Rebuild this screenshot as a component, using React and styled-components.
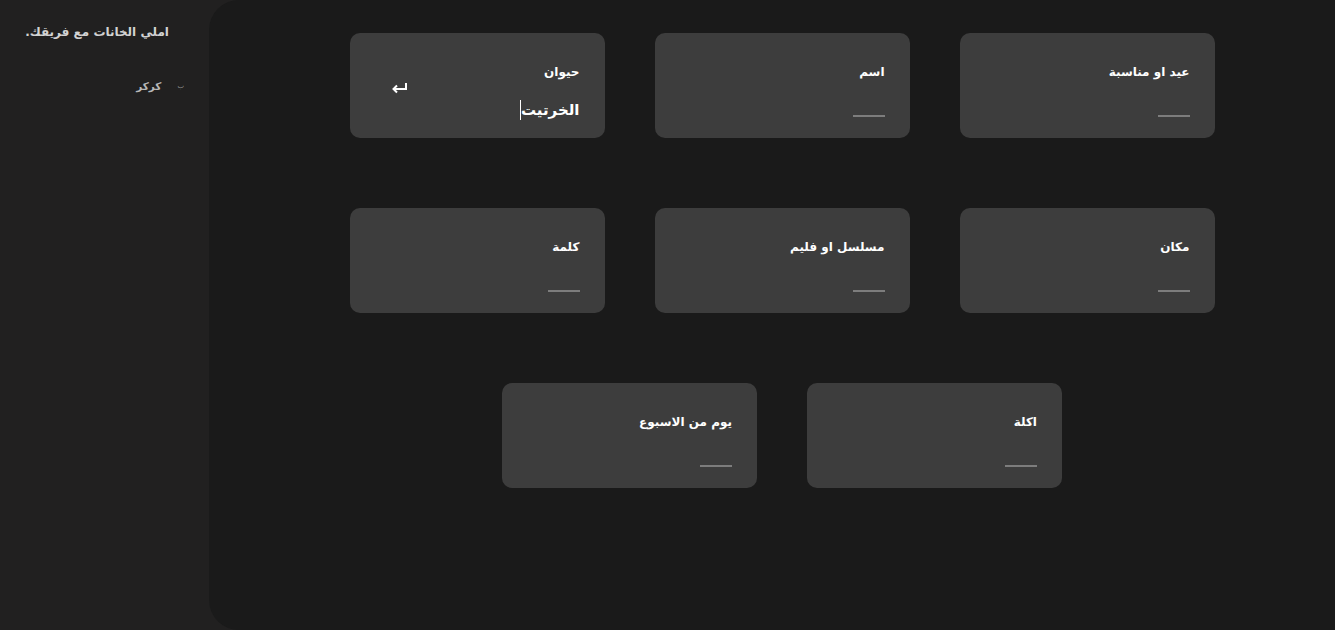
import React from "react";
import styled, { createGlobalStyle } from "styled-components";

const Global = createGlobalStyle`
  html, body { margin: 0; padding: 0; background: #212020; }
  body { font-family: "DejaVu Sans", "Noto Sans", sans-serif; }
  * { box-sizing: border-box; }
`;

const Page = styled.div`
  display: flex;
  height: 630px;
  background: #212020;
`;

const Sidebar = styled.aside`
  width: 209px;
  flex: none;
  direction: rtl;
  padding: 22px 40px 0 0;
  display: flex;
  flex-direction: column;
`;

const SideTitle = styled.h2`
  margin: 0;
  font-size: 12px;
  font-weight: 700;
  color: #d2d2d2;
  line-height: 20px;
`;

const TeamRow = styled.div`
  margin-top: 34px;
  margin-right: -15px;
  display: flex;
  align-items: center;
  gap: 16px;
`;

const TeamMark = styled.span`
  font-size: 7px;
  color: #8a8a8a;
  line-height: 10px;
  margin-top: 4px;
`;

const TeamName = styled.span`
  font-size: 10.5px;
  font-weight: 700;
  color: #b8b8b8;
  margin-top: 4px;
`;

const Main = styled.main`
  flex: 1;
  background: #1a1a1a;
  border-radius: 30px 0 0 30px;
  padding: 33px 0 0 20px;
`;

const Grid = styled.div`
  direction: rtl;
  width: 865px;
  margin: 0 auto;
  display: flex;
  flex-wrap: wrap;
  justify-content: center;
  gap: 70px 50px;
`;

const Card = styled.div`
  width: 255px;
  height: 105px;
  background: #3d3d3d;
  border-radius: 10px;
  display: flex;
  align-items: center;
  padding: 30px 25px ${(p) => (p.$filled ? "18px" : "21px")} 41px;
`;

const Body = styled.div`
  flex: 1;
  align-self: stretch;
  display: flex;
  flex-direction: column;
  justify-content: space-between;
  align-items: flex-start;
`;

const Title = styled.div`
  font-size: 12px;
  font-weight: 700;
  color: #ffffff;
  line-height: 18px;
`;

const EmptyLine = styled.div`
  width: 32px;
  height: 2px;
  background: #7d7d7d;
`;

const Value = styled.div`
  font-size: 15px;
  font-weight: 700;
  color: #ffffff;
  line-height: 20px;
  border-left: 1px solid #ffffff;
`;

const Enter = styled.svg`
  width: 17px;
  height: 12px;
  flex: none;
  margin-top: -7px;
`;

const categories = [
  { title: "عيد او مناسبة" },
  { title: "اسم" },
  { title: "حيوان", value: "الخرتيت" },
  { title: "مكان" },
  { title: "مسلسل او فليم" },
  { title: "كلمة" },
  { title: "اكلة" },
  { title: "يوم من الاسبوع" },
];

export default function App() {
  return (
    <>
      <Global />
      <Page>
        <Sidebar>
          <SideTitle>املي الخانات مع فريقك.</SideTitle>
          <TeamRow>
            <TeamMark>ب</TeamMark>
            <TeamName>كركر</TeamName>
          </TeamRow>
        </Sidebar>
        <Main>
          <Grid>
            {categories.map((c) => (
              <Card key={c.title} $filled={!!c.value}>
                <Body>
                  <Title>{c.title}</Title>
                  {c.value ? <Value>{c.value}</Value> : <EmptyLine />}
                </Body>
                {c.value && (
                  <Enter viewBox="0 0 17 12" fill="none" stroke="#ffffff" strokeWidth="2">
                    <path d="M15 1 V7 H3" />
                    <path d="M6 3.5 L2.5 7 L6 10.5" />
                  </Enter>
                )}
              </Card>
            ))}
          </Grid>
        </Main>
      </Page>
    </>
  );
}
